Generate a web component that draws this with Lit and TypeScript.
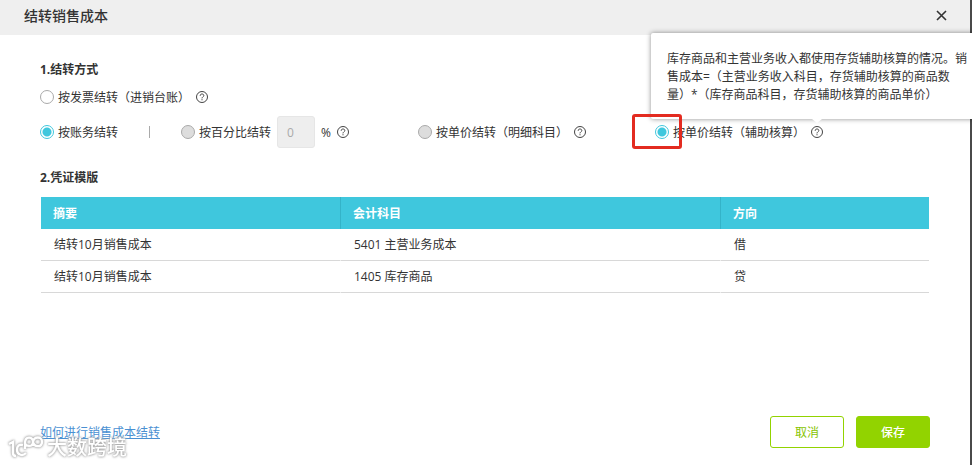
import { LitElement, html, css, nothing } from "lit";
import { customElement, property, state } from "lit/decorators.js";

const rows = [
  { summary: "结转10月销售成本", account: "5401 主营业务成本", direction: "借" },
  { summary: "结转10月销售成本", account: "1405 库存商品", direction: "贷" },
];

const tipText =
  "库存商品和主营业务收入都使用存货辅助核算的情况。销售成本=（主营业务收入科目，存货辅助核算的商品数量）*（库存商品科目，存货辅助核算的商品单价）";

@customElement("help-tip")
export class HelpTip extends LitElement {
  static styles = css`
    :host {
      position: relative;
      display: inline-flex;
    }
    .icon {
      display: flex;
      padding: 0;
      border: 0;
      background: none;
      color: #444;
    }
    .bubble {
      position: absolute;
      left: 50%;
      bottom: calc(100% + 7px);
      transform: translateX(-50%);
      box-sizing: border-box;
      width: 332px;
      padding: 17px 16px 15px;
      border-radius: 2px;
      background: #fff;
      box-shadow: 0 0 5px rgba(0, 0, 0, 0.45);
      line-height: 18px;
      white-space: normal;
      color: #333;
    }
    .bubble::after {
      content: "";
      position: absolute;
      left: 50%;
      top: 100%;
      margin-left: -5px;
      border: 5px solid transparent;
      border-top: 4px solid #fff;
      border-bottom: 0;
    }
  `;

  @property() text = "";

  render() {
    return html`
      <button class="icon" type="button" aria-label="帮助">
        <svg width="12" height="12" viewBox="0 0 12 12" fill="none" stroke="currentColor">
          <circle cx="6" cy="6" r="5.5" />
          <path d="M4.2 4.8C4.2 3.6 4.9 3 6 3S7.8 3.6 7.8 4.6C7.8 5.8 6 5.9 6 7.4" />
          <path d="M6 8.2V9.3" />
        </svg>
      </button>
      ${this.text ? html`<div class="bubble" role="tooltip">${this.text}</div>` : nothing}
    `;
  }
}

@customElement("app-root")
export class AppRoot extends LitElement {
  static styles = css`
    :host {
      display: block;
      overflow: hidden;
      background: #4a4a4a;
      font: 12px/18px "Open Sans", "Noto Sans CJK SC", sans-serif;
      text-spacing-trim: space-all;
      color: #333;
    }
    .dialog {
      position: relative;
      display: flex;
      flex-direction: column;
      box-sizing: border-box;
      min-height: 100vh;
      margin-right: 2px;
      background: #fff;
    }
    .head {
      display: flex;
      align-items: center;
      justify-content: space-between;
      box-sizing: border-box;
      height: 35px;
      padding: 0 23px 4px 24px;
      background: #efefef;
    }
    .title {
      margin: 0;
      font-size: 14px;
      font-weight: 500;
      line-height: 20px;
    }
    .close {
      display: flex;
      padding: 0;
      border: 0;
      background: none;
      color: #333;
    }
    .body {
      padding: 25px 40px 0;
    }
    .section {
      margin: 0;
      font-size: 12px;
      font-weight: 700;
      line-height: 20px;
    }
    .line {
      display: flex;
      align-items: center;
      height: 32px;
    }
    .first {
      margin-top: 1px;
    }
    .second {
      margin: 3px 0 20px;
      gap: 69px;
    }
    .group,
    .option {
      display: flex;
      align-items: center;
      white-space: nowrap;
    }
    .group {
      gap: 6px;
    }
    .option {
      gap: 4px;
    }
    .caption {
      padding-top: 2px;
    }
    .divider {
      width: 1px;
      height: 12px;
      margin: 0 25px;
      background: #aaa;
    }
    .radio {
      appearance: none;
      flex: none;
      box-sizing: border-box;
      width: 14px;
      height: 14px;
      margin: 0;
      border: 1px solid #aaa;
      border-radius: 50%;
      background: #fff;
    }
    .radio:disabled {
      background: #ddd;
    }
    .radio:checked {
      border-color: #3fc7dd;
      background: radial-gradient(circle, #3fc7dd 4px, #fff 5px);
    }
    .percent {
      box-sizing: border-box;
      width: 38px;
      height: 32px;
      padding: 0 9px;
      border: 1px solid #e6e6e6;
      border-radius: 3px;
      background: #eee;
      font: inherit;
      color: #aaa;
    }
    .marked {
      position: relative;
    }
    .marked::before {
      content: "";
      position: absolute;
      left: -23px;
      top: 50%;
      z-index: 2;
      box-sizing: border-box;
      width: 50px;
      height: 35px;
      margin-top: -18px;
      border: 3px solid #e32b20;
      border-radius: 3px;
      pointer-events: none;
    }
    .table {
      width: calc(100% - 2px);
      margin: 9px 1px 0;
      table-layout: fixed;
      border-collapse: separate;
      border-spacing: 0;
    }
    .table th,
    .table td {
      box-sizing: border-box;
      height: 32px;
      text-align: left;
    }
    .table th {
      padding: 1px 12px 0;
      border-right: 1px solid #34b3c8;
      background: #3fc7dd;
      color: #fff;
    }
    .table td {
      padding: 1px 13px 0;
      border-right: 1px solid #fff;
      border-bottom: 1px solid #d8d8d8;
    }
    .table th:last-child,
    .table td:last-child {
      border-right: 0;
    }
    .summary {
      width: 300px;
    }
    .account {
      width: 380px;
    }
    .foot {
      display: flex;
      align-items: center;
      justify-content: space-between;
      margin-top: auto;
      padding: 24px 40px 17px;
    }
    .link {
      padding-top: 2px;
      color: #4a90d2;
    }
    .actions {
      display: flex;
      gap: 12px;
    }
    .btn {
      box-sizing: border-box;
      width: 74px;
      height: 32px;
      padding: 1px 0 0;
      border: 1px solid #92d300;
      border-radius: 3px;
      background: #fff;
      font: inherit;
      color: #86c400;
    }
    .primary {
      background: #92d300;
      font-weight: 500;
      color: #fff;
    }
    .mark {
      position: absolute;
      left: 8px;
      bottom: 4px;
      display: flex;
      align-items: center;
      gap: 3px;
      font-size: 20px;
      font-weight: 500;
      line-height: 24px;
      color: #fff;
      filter: drop-shadow(0 0 1px #999) drop-shadow(0 0 1px #ccc);
      pointer-events: none;
    }
  `;

  @state() private percent = "0";

  private radio(group: string, label: string, checked = false, disabled = false) {
    return html`<label class="option">
      <input class="radio" type="radio" name=${group} ?checked=${checked} ?disabled=${disabled} />
      <span class="caption">${label}</span>
    </label>`;
  }

  render() {
    return html`
      <main class="dialog">
        <header class="head">
          <h1 class="title">结转销售成本</h1>
          <button class="close" type="button" aria-label="关闭">
            <svg width="11" height="11" viewBox="0 0 11 11" stroke="currentColor" stroke-width="1.6">
              <path d="M1 1L10 10M10 1L1 10" />
            </svg>
          </button>
        </header>
        <div class="body">
          <h2 class="section">1.结转方式</h2>
          <div class="line first">
            <div class="group">${this.radio("mode", "按发票结转（进销台账）")}<help-tip></help-tip></div>
          </div>
          <div class="line second">
            <div class="group">
              ${this.radio("mode", "按账务结转", true)}
              <span class="divider"></span>
              ${this.radio("method", "按百分比结转", false, true)}
              <input class="percent" aria-label="百分比" .value=${this.percent} disabled />
              <span class="caption">%</span>
              <help-tip></help-tip>
            </div>
            <div class="group">
              ${this.radio("method", "按单价结转（明细科目）", false, true)}<help-tip></help-tip>
            </div>
            <div class="group marked">
              ${this.radio("method", "按单价结转（辅助核算）", true)}<help-tip .text=${tipText}></help-tip>
            </div>
          </div>
          <h2 class="section">2.凭证模版</h2>
          <table class="table">
            <thead>
              <tr>
                <th class="summary">摘要</th>
                <th class="account">会计科目</th>
                <th>方向</th>
              </tr>
            </thead>
            <tbody>
              ${rows.map(
                (r) => html`<tr>
                  <td>${r.summary}</td>
                  <td>${r.account}</td>
                  <td>${r.direction}</td>
                </tr>`,
              )}
            </tbody>
          </table>
        </div>
        <footer class="foot">
          <a class="link" href="#">如何进行销售成本结转</a>
          <div class="actions">
            <button class="btn" type="button">取消</button>
            <button class="btn primary" type="button">保存</button>
          </div>
        </footer>
        <div class="mark">
          <svg width="36" height="26" viewBox="0 0 36 26" fill="none" stroke="#fff" stroke-width="2.4">
            <path d="M1 9L5 7V18Q5 21 8 21" />
            <path d="M15 10C11 9 9 11 9 15S14 22 18 18" />
            <path d="M17 14V8C17 1 25 1 25 7S17 11 17 8M25 7C26 1 34 1 34 7S26 12 25 7" />
          </svg>
          <span>大数跨境</span>
        </div>
      </main>
    `;
  }
}
